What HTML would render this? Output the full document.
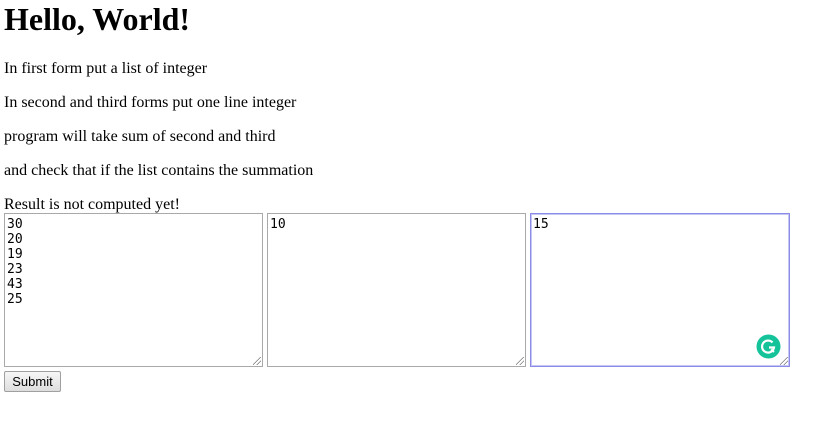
<!DOCTYPE html>
<html><head><style>
body{margin:0;width:830px;height:431px;background:#fff;font-family:"Liberation Serif",serif;color:#000;position:relative;overflow:hidden}
h1{position:absolute;left:4px;top:0;margin:0;font-size:32px;font-weight:bold;line-height:38px}
.p{position:absolute;left:4px;font-size:16px;line-height:18px;white-space:nowrap}
.ta{position:absolute;top:213px;height:154px;box-sizing:border-box;border:1px solid #a9a9a9;font-family:"DejaVu Sans Mono","Liberation Mono",monospace;font-size:13px;line-height:15px;padding:3px 2px 2px 2px;white-space:pre}
.ta.f{border:1px solid #8b8be8;box-shadow:0 0 0 1px #c6c6f5 inset}
.grip{position:absolute;right:1px;bottom:1px;width:8px;height:8px;background:linear-gradient(135deg,transparent 45%,#777 45%,#777 52%,transparent 52%,transparent 70%,#777 70%,#777 77%,transparent 77%)}
.btn{position:absolute;left:4px;top:371px;width:57px;height:21px;box-sizing:border-box;border:1px solid #a0a0a0;border-radius:2px;background:linear-gradient(#f6f6f6,#dedede);font-family:"Liberation Sans",sans-serif;font-size:13px;line-height:19px;text-align:center}
</style></head><body>
<h1>Hello, World!</h1>
<div class="p" style="top:60px">In first form put a list of integer</div>
<div class="p" style="top:94px">In second and third forms put one line integer</div>
<div class="p" style="top:128px">program will take sum of second and third</div>
<div class="p" style="top:162px">and check that if the list contains the summation</div>
<div class="p" style="top:196px">Result is not computed yet!</div>
<div class="ta" style="left:4px;width:259px">30
20
19
23
43
25<div class="grip"></div></div>
<div class="ta" style="left:267px;width:259px">10<div class="grip"></div></div>
<div class="ta f" style="left:530px;width:260px">15<div class="grip"></div>
<svg style="position:absolute;left:225px;top:120px" width="25" height="25" viewBox="0 0 25 25"><circle cx="12.5" cy="12.5" r="12" fill="#15c39a"/><path d="M16.5 8.5A6 6 0 1 0 18 13.5H13" fill="none" stroke="#fff" stroke-width="2.2"/><path d="M15 15.5l3 2.5" stroke="#fff" stroke-width="2"/></svg></div>
<div class="btn">Submit</div>
</body></html>
